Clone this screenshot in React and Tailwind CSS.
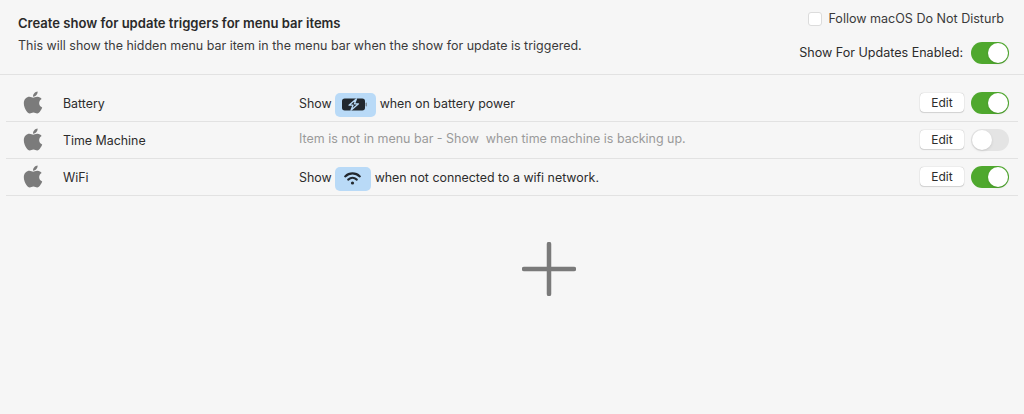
import { FaApple } from "react-icons/fa";

function Toggle({ on }) {
  return (
    <div className={`flex h-[22px] w-[38px] shrink-0 items-center rounded-full p-px ${on ? "justify-end bg-[#4fa82e]" : "justify-start bg-[#e4e4e4]"}`}>
      <div className="h-5 w-5 rounded-full bg-white shadow-sm" />
    </div>
  );
}

function Chip({ width, children }) {
  return (
    <span className={`mr-1 ml-[3px] flex h-6 items-center justify-center rounded-[5px] bg-[#b9daf7] ${width}`}>
      {children}
    </span>
  );
}

function BatteryIcon() {
  return (
    <svg width="26" height="13" viewBox="0 0 26 13">
      <rect x="0.75" y="1.25" width="21.5" height="10.5" rx="2" fill="#23282e" stroke="#23282e" strokeWidth="1.5" />
      <rect x="23.5" y="4.5" width="1.5" height="4" rx="0.75" fill="#7d8a96" />
      <path d="M14.5 0.8 L7 7.2 H11 L9 12.2 L16.5 5.8 H12.5 Z" fill="#23282e" stroke="#b9daf7" strokeWidth="1.3" strokeLinejoin="round" />
    </svg>
  );
}

function WifiIcon() {
  return (
    <svg width="17" height="13" viewBox="0 0 17 13" fill="none" stroke="#23282e" strokeWidth="2.1" strokeLinecap="round">
      <path d="M1.2 4.4 C5.4 0.4 11.6 0.4 15.8 4.4" />
      <path d="M4.2 7.6 C6.8 5.4 10.2 5.4 12.8 7.6" />
      <circle cx="8.5" cy="11" r="1.6" fill="#23282e" stroke="none" />
    </svg>
  );
}

function Row({ name, on, children }) {
  return (
    <div className="flex h-[37px] items-center border-b border-[#e2e2e2] pl-[17px] pr-[9px]">
      <FaApple className="mb-0.5 w-5 shrink-0 text-[25px] text-[#7b7b7b]" />
      <div className="ml-5 w-[236px] pt-[3px] text-[12.4px] text-[#2c2c2c]">{name}</div>
      <div className="flex flex-1 items-center pt-[3px] text-[12.4px] text-[#2c2c2c]">{children}</div>
      <button className="mr-[7px] mb-0.5 h-[19px] w-[44px] rounded-[4px] bg-white text-[12px] leading-[19px] text-[#2c2c2c] shadow-[0_0_1px_rgba(0,0,0,0.35),0_1px_1px_rgba(0,0,0,0.12)]">
        Edit
      </button>
      <Toggle on={on} />
    </div>
  );
}

export default function App() {
  return (
    <div className="h-[414px] w-[1024px] overflow-hidden bg-[#f6f6f6] font-['Inter',sans-serif]">
      <div className="flex h-[75px] justify-between border-b border-[#e2e2e2] pl-[18px] pr-[15px]">
        <div className="pt-[15px]">
          <h1 className="text-[13.05px] leading-[17px] font-semibold text-[#2a2a2a]">Create show for update triggers for menu bar items</h1>
          <p className="mt-[5px] text-[12.47px] leading-[17px] text-[#3a3a3a]">
            This will show the hidden menu bar item in the menu bar when the show for update is triggered.
          </p>
        </div>
        <div className="flex flex-col items-end pt-[11px]">
          <label className="mr-[5px] flex items-center gap-1.5 text-[12.55px] leading-[15px] text-[#3a3a3a]">
            <span className="h-[14px] w-[14px] rounded-[3px] border border-[#dcdcdc] bg-white" />
            Follow macOS Do Not Disturb
          </label>
          <div className="mt-[16px] flex items-center gap-2 text-[12.55px] text-[#2c2c2c]">
            Show For Updates Enabled:
            <Toggle on />
          </div>
        </div>
      </div>

      <div className="mx-1.5 pt-[10px]">
        <Row name="Battery" on>
          Show
          <Chip width="w-[41px]"><BatteryIcon /></Chip>
          when on battery power
        </Row>
        <Row name="Time Machine" on={false}>
          <span className="-mt-[5px] text-[12.46px] text-[#9a9a9a]">Item is not in menu bar - Show&nbsp; when time machine is backing up.</span>
        </Row>
        <Row name="WiFi" on>
          Show
          <Chip width="w-[36px]"><WifiIcon /></Chip>
          when not connected to a wifi network.
        </Row>
      </div>

      <div className="flex justify-center pt-[46px] pl-[74px]">
        <svg width="54" height="54" viewBox="0 0 54 54" stroke="#7a7a7a" strokeWidth="4.5" strokeLinecap="round">
          <path d="M27 2 V52 M2 27 H52" />
        </svg>
      </div>
    </div>
  );
}
